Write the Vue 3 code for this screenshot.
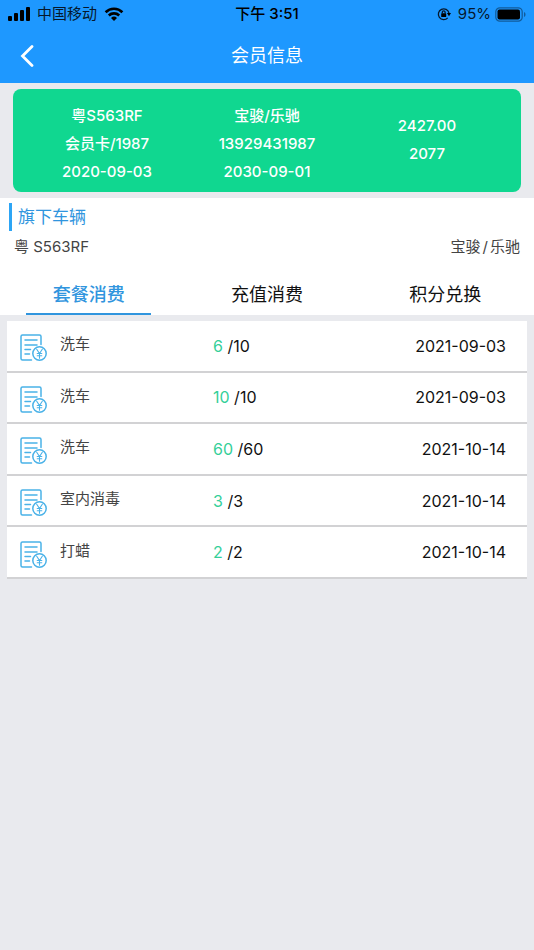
<script setup>
import { ref } from 'vue'

const member = [
  ['粤S563RF', '会员卡/1987', '2020-09-03'],
  ['宝骏/乐驰', '13929431987', '2030-09-01'],
  ['2427.00', '2077'],
]
const tabs = ['套餐消费', '充值消费', '积分兑换']
const active = ref(0)
const records = [
  { name: '洗车', left: 6, total: 10, date: '2021-09-03' },
  { name: '洗车', left: 10, total: 10, date: '2021-09-03' },
  { name: '洗车', left: 60, total: 60, date: '2021-10-14' },
  { name: '室内消毒', left: 3, total: 3, date: '2021-10-14' },
  { name: '打蜡', left: 2, total: 2, date: '2021-10-14' },
]
</script>

<template>
  <div class="page">
    <header class="top">
      <div class="status">
        <div class="status-side">
          <svg class="signal" viewBox="0 0 22 14" aria-hidden="true">
            <rect x="0" y="9" width="4" height="5" rx="1" />
            <rect x="6" y="6" width="4" height="8" rx="1" />
            <rect x="12" y="3" width="4" height="11" rx="1" />
            <rect x="18" y="0" width="4" height="14" rx="1" />
          </svg>
          <span>中国移动</span>
          <svg class="wifi" viewBox="0 0 20 14" aria-hidden="true">
            <path d="M1.600 5.200a12 12 0 0 1 16.800 0" />
            <path d="M4.800 8.500a7.500 7.500 0 0 1 10.400 0" />
            <path class="solid" d="M10 14l-3-3a4.300 4.300 0 0 1 6 0z" />
          </svg>
        </div>
        <div class="clock">下午 3:51</div>
        <div class="status-side end">
          <svg class="lock" viewBox="0 0 14 14" aria-hidden="true">
            <path d="M10.700 10.900A5.400 5.400 0 1 1 12 6" />
            <path class="solid" d="M9.900 6h4.100l-2 3.200z" />
            <rect class="solid" x="4.200" y="6.200" width="5" height="3.800" rx=".6" />
            <path d="M5.300 6.400V5.300a1.400 1.400 0 0 1 2.800 0v1.100" />
          </svg>
          <span>95%</span>
          <svg class="battery" viewBox="0 0 31 15" aria-hidden="true">
            <rect class="shell" x=".8" y=".8" width="26.400" height="13.400" rx="4" />
            <rect x="2.500" y="2.500" width="22.500" height="10" rx="2" />
            <path class="cap" d="M29 5c2 .8 2 4.200 0 5z" />
          </svg>
        </div>
      </div>
      <nav class="nav">
        <button class="back" type="button" aria-label="返回">
          <svg viewBox="0 0 14 22" aria-hidden="true"><path d="M12 1.500L2.500 11l9.500 9.500" /></svg>
        </button>
        <h1>会员信息</h1>
      </nav>
    </header>

    <section class="card">
      <div v-for="(col, i) in member" :key="i" class="card-col">
        <span v-for="line in col" :key="line">{{ line }}</span>
      </div>
    </section>

    <section class="panel">
      <h2>旗下车辆</h2>
      <div class="car">
        <span>粤 S563RF</span>
        <span>宝骏<span class="slash">/</span>乐驰</span>
      </div>
      <div class="tabs" role="tablist">
        <button
          v-for="(tab, i) in tabs"
          :key="tab"
          type="button"
          role="tab"
          class="tab"
          :class="{ active: active === i }"
          :aria-selected="active === i"
          @click="active = i"
        >{{ tab }}</button>
      </div>
    </section>

    <ul class="list">
      <li v-for="(r, i) in records" :key="i" class="row">
        <svg class="bill" viewBox="0 0 27 27" aria-hidden="true">
          <path d="M21 10.500V2.500a1.500 1.500 0 0 0-1.500-1.500h-17A1.500 1.500 0 0 0 1 2.500v22A1.500 1.500 0 0 0 2.500 26H11.500" />
          <path d="M5 6h12M5 11h12M5 15.500h5.500M5 20h4.500" />
          <circle cx="19.500" cy="19.500" r="6.700" />
          <path class="yen" d="M16.700 15.200l2.800 4.300 2.800-4.300M19.500 19.500v4.700M17.200 19.500h4.600M17.200 21.700h4.600" />
        </svg>
        <span class="name">{{ r.name }}</span>
        <span class="count"><b>{{ r.left }}</b> /{{ r.total }}</span>
        <time>{{ r.date }}</time>
      </li>
    </ul>
  </div>
</template>

<style>
body {
  background: #e9eaee;
}
</style>

<style scoped>
.page {
  min-height: 100vh;
  background: #e9eaee;
  color: #111;
  font: 16px/28px Inter, "Noto Sans CJK SC", sans-serif;
}
.top {
  background: #1e98ff;
}
.status {
  display: grid;
  grid-template-columns: 1fr auto 1fr;
  align-items: center;
  height: 28px;
  padding: 0 8px;
  color: #06182c;
  font-size: 15px;
}
.status-side {
  display: flex;
  align-items: center;
  gap: 7px;
}
.end {
  justify-content: flex-end;
  gap: 4px;
  font-size: 15px;
}
.clock {
  color: #000;
  font-weight: 500;
}
.signal {
  width: 22px;
  height: 14px;
}
.wifi {
  width: 20px;
  height: 14px;
  fill: none;
  stroke: #000;
  stroke-width: 2.6;
}
.lock {
  width: 14px;
  height: 14px;
  margin-right: 3px;
  fill: none;
  stroke: #06182c;
  stroke-width: 1.3;
}
.solid {
  fill: #000;
  stroke: none;
}
.battery {
  width: 31px;
  height: 15px;
}
.shell {
  fill: none;
  stroke: #125b9a;
  stroke-width: 1.2;
}
.cap {
  fill: #125b9a;
}
.nav {
  display: grid;
  grid-template-columns: 54px 1fr 54px;
  align-items: center;
  height: 55px;
}
.back {
  display: flex;
  align-items: center;
  justify-content: center;
  height: 54px;
  padding: 0;
  border: 0;
  background: none;
}
.back svg {
  width: 14px;
  height: 22px;
  fill: none;
  stroke: #fff;
  stroke-width: 2.8;
  stroke-linecap: round;
}
h1 {
  margin: 0;
  color: #fff;
  font-size: 18px;
  font-weight: 400;
  text-align: center;
}
.card {
  display: grid;
  grid-template-columns: repeat(3, 1fr);
  align-items: center;
  margin: 6px 13px;
  padding: 13px 14px 6px;
  border-radius: 8px;
  background: #10d790;
  color: #fff;
  font-size: 15px;
  font-weight: 500;
}
.card-col {
  display: flex;
  flex-direction: column;
  align-items: center;
}
.card-col:last-child {
  padding-bottom: 8px;
}
.panel {
  padding-top: 5px;
  background: #fff;
}
h2 {
  margin: 0 9px;
  padding-left: 6px;
  border-left: 3px solid #2da5f5;
  color: #3095de;
  font-size: 17px;
  font-weight: 400;
}
.car {
  display: flex;
  justify-content: space-between;
  padding: 2px 14px;
  color: #444;
  font-size: 15px;
}
.slash {
  margin: 0 2px;
}
.tabs {
  display: flex;
  justify-content: space-between;
  padding: 12px 26px 0;
}
.tab {
  width: 26%;
  height: 40px;
  padding: 2px 0 0;
  border: 0;
  border-bottom: 2px solid transparent;
  background: none;
  color: #111;
  font: inherit;
  font-size: 18px;
}
.active {
  border-color: #3095de;
  color: #3095de;
  font-weight: 500;
}
.list {
  display: flex;
  flex-direction: column;
  min-height: 258px;
  margin: 6px 7px;
  padding: 0;
  background: #fff;
  list-style: none;
}
.row {
  flex: 1;
  display: grid;
  grid-template-columns: 40px 153px 1fr auto;
  align-items: center;
  box-sizing: border-box;
  padding: 0 21px 0 13px;
  border-bottom: 2px solid #d2d2d4;
}
.bill {
  width: 27px;
  height: 27px;
  margin-top: 4px;
  fill: none;
  stroke: #4ab2e8;
  stroke-width: 1.5;
  stroke-linecap: round;
}
.yen {
  stroke-width: 1.1;
}
.name {
  padding-bottom: 3px;
  color: #444;
  font-size: 15px;
}
.count b {
  color: #35cf99;
  font-weight: 400;
}
</style>
